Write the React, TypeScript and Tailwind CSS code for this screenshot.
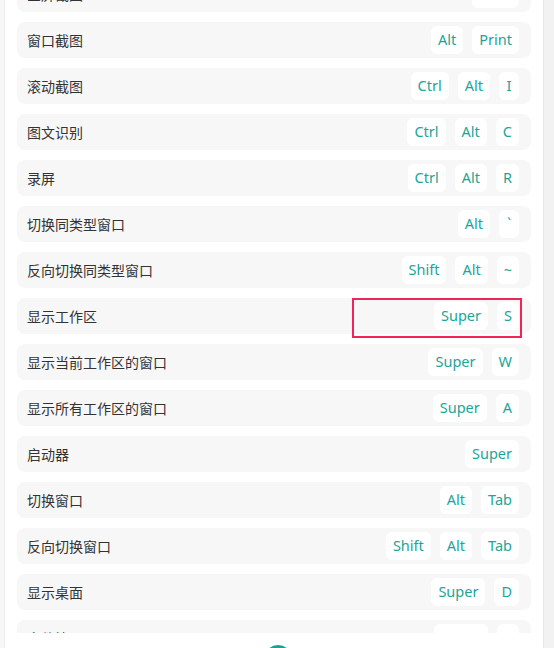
const rows: { label: string; keys: string[] }[] = [
  { label: "全屏截图", keys: ["Print"] },
  { label: "窗口截图", keys: ["Alt", "Print"] },
  { label: "滚动截图", keys: ["Ctrl", "Alt", "I"] },
  { label: "图文识别", keys: ["Ctrl", "Alt", "C"] },
  { label: "录屏", keys: ["Ctrl", "Alt", "R"] },
  { label: "切换同类型窗口", keys: ["Alt", "`"] },
  { label: "反向切换同类型窗口", keys: ["Shift", "Alt", "~"] },
  { label: "显示工作区", keys: ["Super", "S"] },
  { label: "显示当前工作区的窗口", keys: ["Super", "W"] },
  { label: "显示所有工作区的窗口", keys: ["Super", "A"] },
  { label: "启动器", keys: ["Super"] },
  { label: "切换窗口", keys: ["Alt", "Tab"] },
  { label: "反向切换窗口", keys: ["Shift", "Alt", "Tab"] },
  { label: "显示桌面", keys: ["Super", "D"] },
  { label: "文件管理器", keys: ["Super", "E"] },
];

const font = { fontFamily: '"Noto Sans", "Noto Sans CJK SC", sans-serif' };

const ShortcutRow = ({ label, keys, highlight }: { label: string; keys: string[]; highlight?: boolean }) => {
  return (
    <div className="relative flex h-9 shrink-0 items-center justify-between rounded-lg bg-[#f7f7f7] pl-[10px] pr-3">
      <span className="text-[14px] text-[#333]">{label}</span>
      <div className="flex items-center gap-[9px]">
        {keys.map((k) => (
          <span
            key={k}
            className="flex h-7 min-w-[20px] items-center justify-center rounded-md bg-white px-[7px] text-[14.5px] text-[#1ba597]"
          >
            {k}
          </span>
        ))}
      </div>
      {/* highlight frame */}
      {highlight && (
        <div className="pointer-events-none absolute right-[9px] top-0 h-10 w-[170px] border-2 border-[#f0245a]" />
      )}
    </div>
  );
};

export default function App() {
  return (
    <div className="flex h-[648px] w-[554px] overflow-hidden bg-white" style={font}>
      <div className="w-[5px] border-r border-[#ececec] bg-[#f7f7f7]" />
      <div className="flex w-[538px] flex-col">
        <div className="h-[633px] shrink-0 overflow-hidden">
          <div className="-mt-6 flex flex-col gap-[10px] pl-3 pr-3">
            {rows.map((r) => (
              <ShortcutRow key={r.label} label={r.label} keys={r.keys} highlight={r.label === "显示工作区"} />
            ))}
          </div>
        </div>
        <div className="flex flex-1 justify-center overflow-hidden pl-2 pt-3">
          <div className="h-7 w-7 shrink-0 rounded-full bg-[#14a394]" />
        </div>
      </div>
      <div className="flex-1 border-l border-[#e6e6e6] bg-[#f2f2f2]" />
    </div>
  );
}
